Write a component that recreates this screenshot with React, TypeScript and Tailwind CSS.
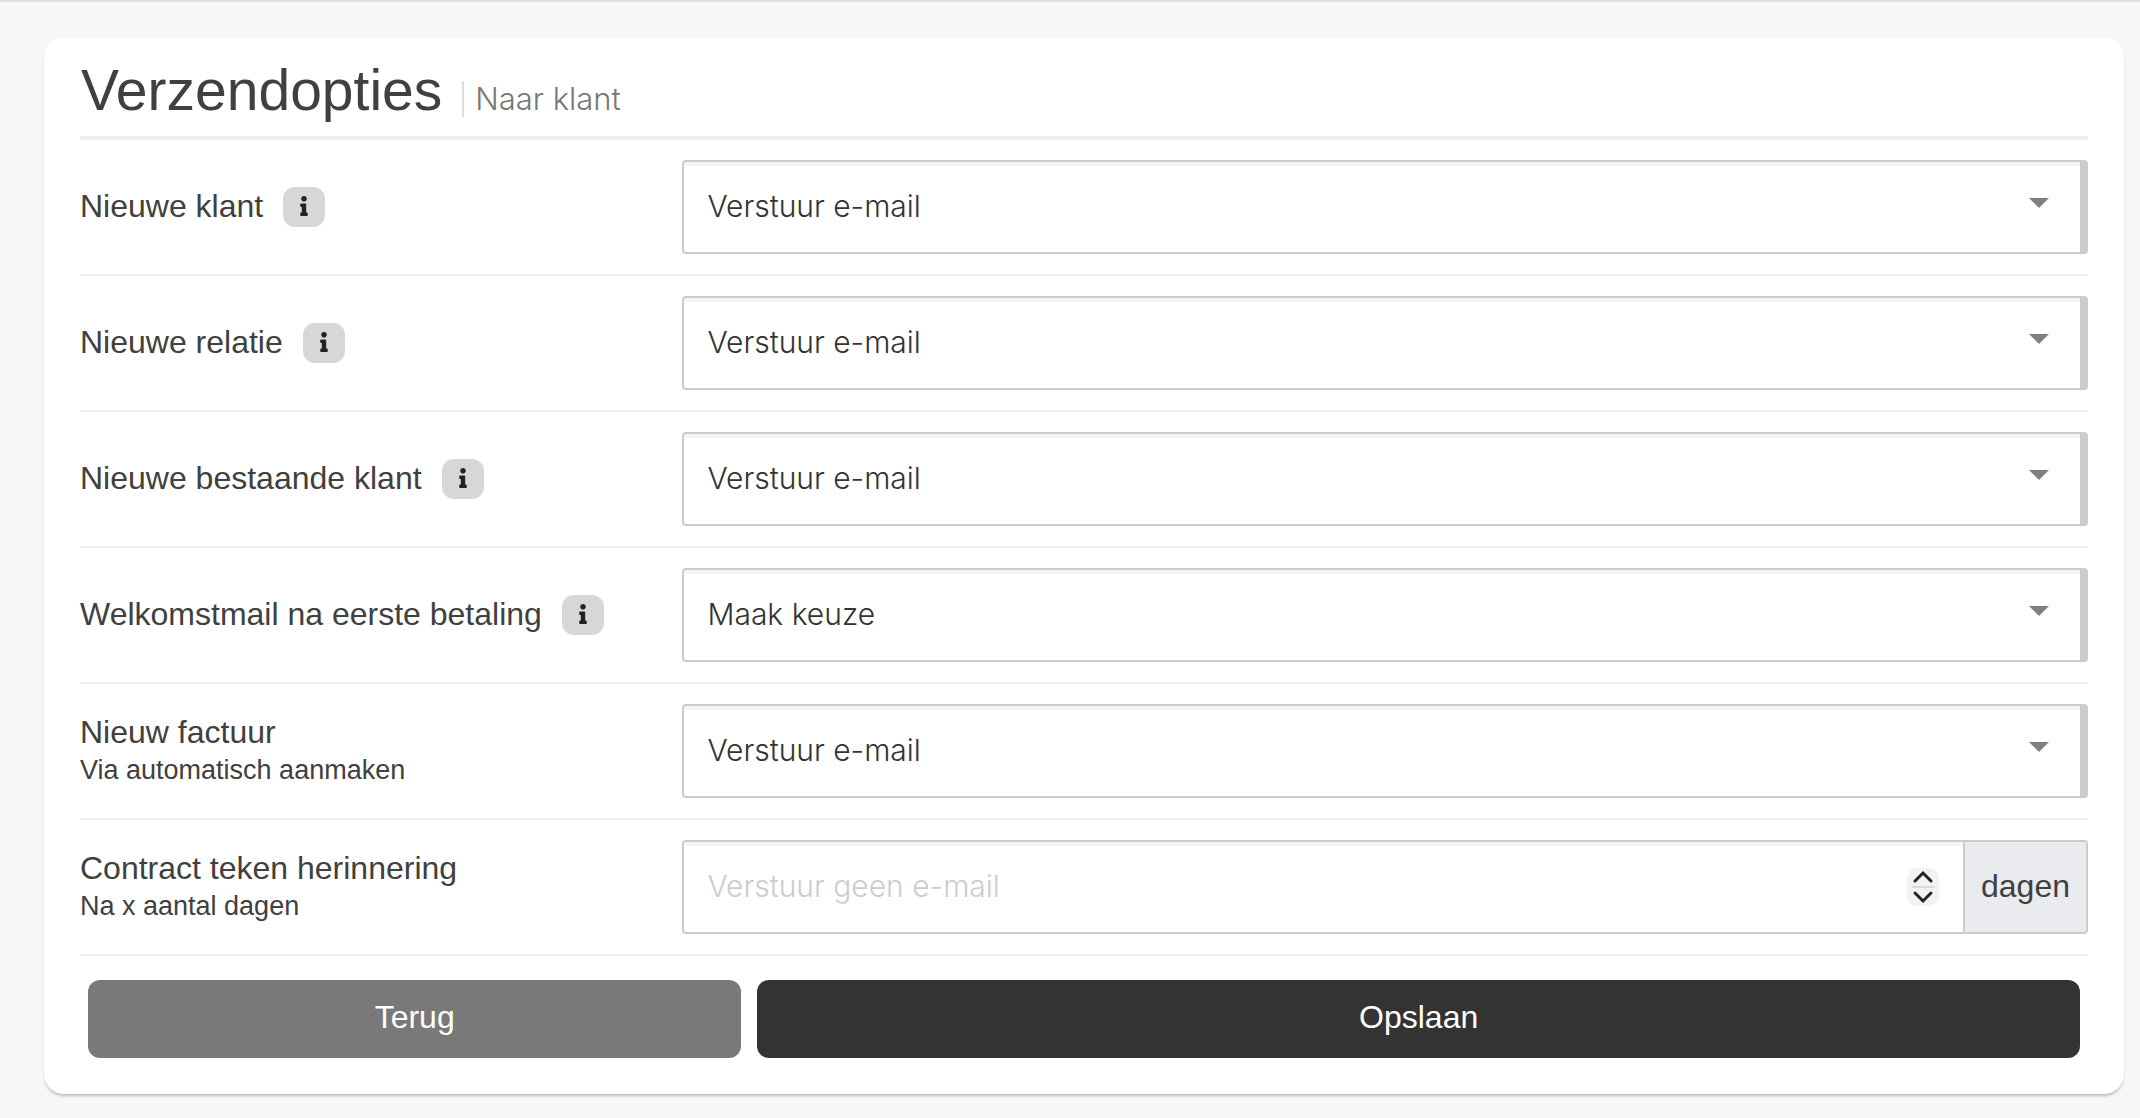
import { useState } from "react";
import { FaInfo } from "react-icons/fa";

const mailOptions = ["Maak keuze", "Verstuur e-mail", "Verstuur geen e-mail"];

const rows = [
    { id: "nieuwe-klant", label: "Nieuwe klant", info: true, value: "Verstuur e-mail" },
    { id: "nieuwe-relatie", label: "Nieuwe relatie", info: true, value: "Verstuur e-mail" },
    { id: "bestaande-klant", label: "Nieuwe bestaande klant", info: true, value: "Verstuur e-mail" },
    { id: "welkomstmail", label: "Welkomstmail na eerste betaling", info: true, value: "Maak keuze" },
    { id: "factuur", label: "Nieuw factuur", note: "Via automatisch aanmaken", value: "Verstuur e-mail" },
];

type RowProps = {
    id: string;
    label: string;
    note?: string;
    info?: boolean;
    children: React.ReactNode;
};

function FormRow({ id, label, note, info, children }: RowProps) {
    return (
        <div className="flex items-center border-b-2 border-[#eeeeee] py-5">
            <div className="flex w-[30%] shrink-0 items-start gap-5">
                <label htmlFor={id} className="text-[32px] leading-[38px]">
                    {label}
                    {note && <small className="block text-[27px] leading-[38px]">{note}</small>}
                </label>
                {info && (
                    <button
                        type="button"
                        aria-label={`Uitleg over ${label}`}
                        className="flex h-10 w-[42px] items-center justify-center rounded-xl bg-[#d7d7d7] pb-[2px] text-[#222222]"
                    >
                        <FaInfo className="h-5 w-5" />
                    </button>
                )}
            </div>
            <div className="min-w-0 flex-1">{children}</div>
        </div>
    );
}

function MailSelect({ id, value }: { id: string; value: string }) {
    return (
        <div className="relative">
            <select
                id={id}
                defaultValue={value}
                className="block h-[94px] w-full appearance-none rounded border-2 border-r-8 border-[#cccccc] bg-white px-[23px] pb-[2px] font-['Inter',sans-serif] text-[30px] font-light text-[#333333] shadow-[inset_0_4px_0_#f5f5f5] outline-none"
            >
                {mailOptions.map((option) => (
                    <option key={option}>{option}</option>
                ))}
            </select>
            <svg
                viewBox="0 0 20 10"
                className="pointer-events-none absolute top-[38px] right-[39px] h-[10px] w-5 fill-[#808080]"
                aria-hidden="true"
            >
                <path d="M0 0h20L10 10z" />
            </svg>
        </div>
    );
}

function DaysInput({ id }: { id: string }) {
    const [days, setDays] = useState("");
    const step = (delta: number) => setDays(String(Math.max(0, Number(days) + delta)));

    return (
        <div className="flex h-[94px] overflow-hidden rounded border-2 border-[#cccccc]">
            <div className="flex min-w-0 flex-1 items-center pr-6 shadow-[inset_0_4px_0_#f5f5f5]">
                <input
                    id={id}
                    type="number"
                    min="0"
                    value={days}
                    onChange={(e) => setDays(e.target.value)}
                    placeholder="Verstuur geen e-mail"
                    className="h-full min-w-0 flex-1 bg-transparent px-[23px] pb-[2px] font-['Inter',sans-serif] text-[30px] font-light text-[#333333] outline-none [appearance:textfield] placeholder:text-[#cccccc]"
                />
                <div className="flex flex-col items-center rounded-[10px] bg-[#f2f2f2] px-[5px]">
                    <button type="button" aria-label="Meer dagen" onClick={() => step(1)} className="h-[18px]">
                        <svg viewBox="0 0 22 18" className="h-[18px] w-[22px] fill-none stroke-[#222222] stroke-3">
                            <path d="M3 13l8-8 8 8" strokeLinecap="round" />
                        </svg>
                    </button>
                    <span className="h-[2px] w-[22px] bg-[#dadada]" />
                    <button type="button" aria-label="Minder dagen" onClick={() => step(-1)} className="h-[18px]">
                        <svg viewBox="0 0 22 18" className="h-[18px] w-[22px] fill-none stroke-[#222222] stroke-3">
                            <path d="M3 5l8 8 8-8" strokeLinecap="round" />
                        </svg>
                    </button>
                </div>
            </div>
            <span className="flex items-center border-l-2 border-[#cccccc] bg-[#eaebef] px-4 pb-[2px] text-[32px]">
                dagen
            </span>
        </div>
    );
}

export default function App() {
    return (
        <div className="min-h-screen border-t-2 border-[#dfdedc] bg-[#f8f7f5] pt-9 pr-4 pb-6 pl-11 font-['Liberation_Sans',Arial,sans-serif] text-[#404040]">
            <form
                onSubmit={(e) => e.preventDefault()}
                className="rounded-[20px] bg-white px-9 pb-9 shadow-[0_3px_3px_-1px_rgba(0,0,0,0.25)]"
            >
                <header className="flex items-baseline gap-5 border-b-4 border-[#eeeeee] pt-5 pb-[14px] pl-px">
                    <h1 className="text-[57px] leading-[64px]">Verzendopties</h1>
                    <small className="border-l-2 border-[#dddddd] pl-[11px] font-['Inter',sans-serif] text-[31px] leading-9 font-light text-[#777777]">
                        Naar klant
                    </small>
                </header>

                {rows.map((row) => (
                    <FormRow key={row.id} id={row.id} label={row.label} note={row.note} info={row.info}>
                        <MailSelect id={row.id} value={row.value} />
                    </FormRow>
                ))}
                <FormRow id="herinnering" label="Contract teken herinnering" note="Na x aantal dagen">
                    <DaysInput id="herinnering" />
                </FormRow>

                <div className="flex pt-6 text-[32px] text-white">
                    <div className="w-1/3 px-2">
                        <button type="button" className="h-[78px] w-full rounded-xl bg-[#797979] pb-1">
                            Terug
                        </button>
                    </div>
                    <div className="w-2/3 px-2">
                        <button type="submit" className="h-[78px] w-full rounded-xl bg-[#333333] pb-1">
                            Opslaan
                        </button>
                    </div>
                </div>
            </form>
        </div>
    );
}
